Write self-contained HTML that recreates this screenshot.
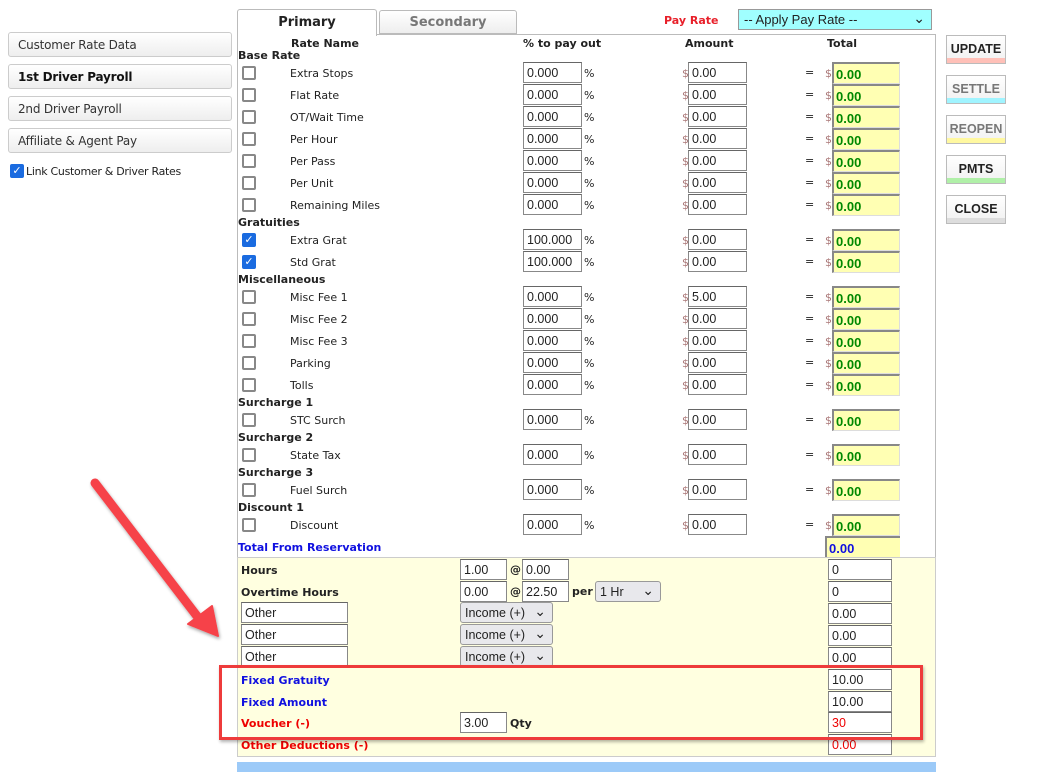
<!DOCTYPE html>
<html><head><meta charset="utf-8"><style>
*{box-sizing:border-box}
body{margin:0;width:1044px;height:772px;background:#fff;font-family:"DejaVu Sans","Liberation Sans",sans-serif;font-size:11px;color:#222;position:relative;overflow:hidden}
.a{position:absolute}
.lb{position:absolute;left:8px;width:224px;height:25px;border:1px solid #ccc;border-radius:3px;background:linear-gradient(#fff,#eee);padding:5px 9px;font-size:12px;color:#333;letter-spacing:-0.2px}
.rb{position:absolute;left:946px;width:60px;height:29px;border:1px solid #bbb;background:linear-gradient(#fff,#f0f0f0);font-weight:bold;font-size:12.5px;text-align:center;padding-top:6px;font-family:"Liberation Sans",sans-serif}
.rb i{position:absolute;left:0;right:0;bottom:0;height:5px}
.r{position:absolute;left:0;width:1044px;height:22px}
.cb{position:absolute;left:242px;top:4px;width:14px;height:14px;border:2px solid #888;border-radius:2px;background:#fff}
.ck{position:absolute;left:242px;top:4px;width:14px;height:14px;border-radius:2px;background:#1a6be0;color:#fff;font-size:11px;line-height:14px;text-align:center;font-weight:bold}
.nm{position:absolute;left:290px;top:5px;font-size:11px}
.in{position:absolute;height:21px;border:1px solid #888;border-top-color:#666;background:#fff;font-size:12.5px;padding:3px 3px 0;font-family:"Liberation Sans",sans-serif;line-height:15px}
.p{left:523px;width:59px;top:0}
.am{left:688px;width:59px;top:0}
.pc{position:absolute;left:584px;top:5px;font-size:11px}
.d{position:absolute;left:682px;top:5px;font-size:11px;color:#a77}
.eq{position:absolute;left:805px;top:4px;font-size:11px}
.d2{position:absolute;left:825px;top:5px;font-size:11px;color:#a77}
.tt{position:absolute;left:832px;top:0;width:68px;height:22px;background:#ffffb3;border-top:2px solid #888;border-left:2px solid #888;border-right:1px solid #ddd;border-bottom:1px solid #ddd;color:#080;font-weight:bold;font-size:13px;padding:3px 2px 0;line-height:15px;font-family:"Liberation Sans",sans-serif}
.h{position:absolute;left:238px;font-weight:bold;font-size:11px}
.bl{position:absolute;left:241px;font-weight:bold;font-size:11px}
.sel{position:absolute;height:21px;border:1px solid #999;border-radius:3px;background:#e8e8ec;font-size:12.5px;padding:3px 4px 0;line-height:15px;font-family:"Liberation Sans",sans-serif}
.sel span{position:absolute;right:6px;top:1px;font-size:14px}
.rc{left:828px;width:64px}
</style></head><body>

<div class="lb" style="top:32px">Customer Rate Data</div>
<div class="lb" style="top:64px;font-weight:bold;color:#111">1st Driver Payroll</div>
<div class="lb" style="top:96px">2nd Driver Payroll</div>
<div class="lb" style="top:128px">Affiliate &amp; Agent Pay</div>
<div class="a" style="left:10px;top:164px;width:14px;height:14px;background:#1a6be0;border-radius:2px;color:#fff;font-size:11px;line-height:14px;text-align:center;font-weight:bold">✓</div>
<div class="a" style="left:26px;top:165px;font-size:11px;letter-spacing:-0.3px">Link Customer &amp; Driver Rates</div>

<div class="a" style="left:237px;top:9px;width:140px;height:27px;border:1px solid #bbb;border-bottom:none;background:#fff;border-radius:3px 3px 0 0;text-align:center;font-weight:bold;font-size:13px;padding-top:5px">Primary</div>
<div class="a" style="left:379px;top:10px;width:138px;height:24px;border:1px solid #bbb;background:linear-gradient(#fff,#eee);border-radius:3px 3px 0 0;text-align:center;font-weight:bold;font-size:13px;padding-top:4px;color:#777">Secondary</div>
<div class="a" style="left:376px;top:34px;width:560px;height:1px;background:#bbb"></div>
<div class="a" style="left:237px;top:35px;width:1px;height:523px;background:#bbb"></div>
<div class="a" style="left:935px;top:34px;width:1px;height:722px;background:#bbb"></div>
<div class="a" style="left:664px;top:14px;color:#e8202a;font-weight:bold;font-size:11px">Pay Rate</div>
<div class="a" style="left:738px;top:9px;width:194px;height:21px;background:#a0ffff;border:1px solid #999;font-size:13px;padding:2px 5px;font-family:'Liberation Sans',sans-serif">-- Apply Pay Rate --<span style="position:absolute;right:6px;top:0px;font-size:14px">&#8964;</span></div>

<div class="a" style="left:291px;top:37px;font-weight:bold">Rate Name</div>
<div class="a" style="left:523px;top:37px;font-weight:bold">% to pay out</div>
<div class="a" style="left:685px;top:37px;font-weight:bold">Amount</div>
<div class="a" style="left:827px;top:37px;font-weight:bold">Total</div>

<div class="rb" style="top:35px">UPDATE<i style="background:#ffc0b8"></i></div>
<div class="rb" style="top:75px;color:#777">SETTLE<i style="background:#a0f4ff"></i></div>
<div class="rb" style="top:115px;color:#777">REOPEN<i style="background:#fff8a0"></i></div>
<div class="rb" style="top:155px">PMTS<i style="background:#b0f0a8"></i></div>
<div class="rb" style="top:195px">CLOSE<i style="background:#ddd"></i></div>

<div class="h" style="top:49px">Base Rate</div>
<div class="r" style="top:62px"><div class="cb"></div><div class="nm">Extra Stops</div><div class="in p">0.000</div><div class="pc">%</div><div class="d">$</div><div class="in am">0.00</div><div class="eq">=</div><div class="d2">$</div><div class="tt">0.00</div></div>
<div class="r" style="top:84px"><div class="cb"></div><div class="nm">Flat Rate</div><div class="in p">0.000</div><div class="pc">%</div><div class="d">$</div><div class="in am">0.00</div><div class="eq">=</div><div class="d2">$</div><div class="tt">0.00</div></div>
<div class="r" style="top:106px"><div class="cb"></div><div class="nm">OT/Wait Time</div><div class="in p">0.000</div><div class="pc">%</div><div class="d">$</div><div class="in am">0.00</div><div class="eq">=</div><div class="d2">$</div><div class="tt">0.00</div></div>
<div class="r" style="top:128px"><div class="cb"></div><div class="nm">Per Hour</div><div class="in p">0.000</div><div class="pc">%</div><div class="d">$</div><div class="in am">0.00</div><div class="eq">=</div><div class="d2">$</div><div class="tt">0.00</div></div>
<div class="r" style="top:150px"><div class="cb"></div><div class="nm">Per Pass</div><div class="in p">0.000</div><div class="pc">%</div><div class="d">$</div><div class="in am">0.00</div><div class="eq">=</div><div class="d2">$</div><div class="tt">0.00</div></div>
<div class="r" style="top:172px"><div class="cb"></div><div class="nm">Per Unit</div><div class="in p">0.000</div><div class="pc">%</div><div class="d">$</div><div class="in am">0.00</div><div class="eq">=</div><div class="d2">$</div><div class="tt">0.00</div></div>
<div class="r" style="top:194px"><div class="cb"></div><div class="nm">Remaining Miles</div><div class="in p">0.000</div><div class="pc">%</div><div class="d">$</div><div class="in am">0.00</div><div class="eq">=</div><div class="d2">$</div><div class="tt">0.00</div></div>

<div class="h" style="top:216px">Gratuities</div>
<div class="r" style="top:229px"><div class="ck">✓</div><div class="nm">Extra Grat</div><div class="in p">100.000</div><div class="pc">%</div><div class="d">$</div><div class="in am">0.00</div><div class="eq">=</div><div class="d2">$</div><div class="tt">0.00</div></div>
<div class="r" style="top:251px"><div class="ck">✓</div><div class="nm">Std Grat</div><div class="in p">100.000</div><div class="pc">%</div><div class="d">$</div><div class="in am">0.00</div><div class="eq">=</div><div class="d2">$</div><div class="tt">0.00</div></div>

<div class="h" style="top:273px">Miscellaneous</div>
<div class="r" style="top:286px"><div class="cb"></div><div class="nm">Misc Fee 1</div><div class="in p">0.000</div><div class="pc">%</div><div class="d">$</div><div class="in am">5.00</div><div class="eq">=</div><div class="d2">$</div><div class="tt">0.00</div></div>
<div class="r" style="top:308px"><div class="cb"></div><div class="nm">Misc Fee 2</div><div class="in p">0.000</div><div class="pc">%</div><div class="d">$</div><div class="in am">0.00</div><div class="eq">=</div><div class="d2">$</div><div class="tt">0.00</div></div>
<div class="r" style="top:330px"><div class="cb"></div><div class="nm">Misc Fee 3</div><div class="in p">0.000</div><div class="pc">%</div><div class="d">$</div><div class="in am">0.00</div><div class="eq">=</div><div class="d2">$</div><div class="tt">0.00</div></div>
<div class="r" style="top:352px"><div class="cb"></div><div class="nm">Parking</div><div class="in p">0.000</div><div class="pc">%</div><div class="d">$</div><div class="in am">0.00</div><div class="eq">=</div><div class="d2">$</div><div class="tt">0.00</div></div>
<div class="r" style="top:374px"><div class="cb"></div><div class="nm">Tolls</div><div class="in p">0.000</div><div class="pc">%</div><div class="d">$</div><div class="in am">0.00</div><div class="eq">=</div><div class="d2">$</div><div class="tt">0.00</div></div>

<div class="h" style="top:396px">Surcharge 1</div>
<div class="r" style="top:409px"><div class="cb"></div><div class="nm">STC Surch</div><div class="in p">0.000</div><div class="pc">%</div><div class="d">$</div><div class="in am">0.00</div><div class="eq">=</div><div class="d2">$</div><div class="tt">0.00</div></div>
<div class="h" style="top:431px">Surcharge 2</div>
<div class="r" style="top:444px"><div class="cb"></div><div class="nm">State Tax</div><div class="in p">0.000</div><div class="pc">%</div><div class="d">$</div><div class="in am">0.00</div><div class="eq">=</div><div class="d2">$</div><div class="tt">0.00</div></div>
<div class="h" style="top:466px">Surcharge 3</div>
<div class="r" style="top:479px"><div class="cb"></div><div class="nm">Fuel Surch</div><div class="in p">0.000</div><div class="pc">%</div><div class="d">$</div><div class="in am">0.00</div><div class="eq">=</div><div class="d2">$</div><div class="tt">0.00</div></div>
<div class="h" style="top:501px">Discount 1</div>
<div class="r" style="top:514px"><div class="cb"></div><div class="nm">Discount</div><div class="in p">0.000</div><div class="pc">%</div><div class="d">$</div><div class="in am">0.00</div><div class="eq">=</div><div class="d2">$</div><div class="tt">0.00</div></div>

<div class="h" style="top:541px;color:#1010e0">Total From Reservation</div>
<div class="a" style="left:825px;top:536px;width:75px;height:22px;background:#ffffb3;border-top:2px solid #888;border-left:2px solid #888;color:#1010e0;font-weight:bold;font-size:13px;padding:3px 2px 0;line-height:15px;font-family:'Liberation Sans',sans-serif">0.00</div>

<div class="a" style="left:237px;top:557px;width:699px;height:200px;background:#ffffe0;border:1px solid #ccc"></div>
<div class="bl" style="top:564px">Hours</div>
<div class="in" style="left:460px;top:559px;width:47px">1.00</div>
<div class="a" style="left:510px;top:563px;font-weight:bold">@</div>
<div class="in" style="left:522px;top:559px;width:47px">0.00</div>
<div class="in rc" style="top:559px">0</div>

<div class="bl" style="top:586px">Overtime Hours</div>
<div class="in" style="left:460px;top:581px;width:47px">0.00</div>
<div class="a" style="left:510px;top:585px;font-weight:bold">@</div>
<div class="in" style="left:522px;top:581px;width:47px">22.50</div>
<div class="a" style="left:572px;top:585px;font-weight:bold">per</div>
<div class="sel" style="left:595px;top:581px;width:66px">1 Hr<span>&#8964;</span></div>
<div class="in rc" style="top:581px">0</div>

<div class="in" style="left:241px;top:602px;width:107px">Other</div>
<div class="sel" style="left:460px;top:602px;width:93px">Income (+)<span>&#8964;</span></div>
<div class="in rc" style="top:603px">0.00</div>
<div class="in" style="left:241px;top:624px;width:107px">Other</div>
<div class="sel" style="left:460px;top:624px;width:93px">Income (+)<span>&#8964;</span></div>
<div class="in rc" style="top:625px">0.00</div>
<div class="in" style="left:241px;top:646px;width:107px">Other</div>
<div class="sel" style="left:460px;top:646px;width:93px">Income (+)<span>&#8964;</span></div>
<div class="in rc" style="top:647px">0.00</div>

<div class="bl" style="top:674px;color:#1010e0">Fixed Gratuity</div>
<div class="in rc" style="top:669px">10.00</div>
<div class="bl" style="top:696px;color:#1010e0">Fixed Amount</div>
<div class="in rc" style="top:691px">10.00</div>
<div class="bl" style="top:717px;color:#e00">Voucher (-)</div>
<div class="in" style="left:460px;top:712px;width:47px">3.00</div>
<div class="a" style="left:510px;top:717px;font-weight:bold">Qty</div>
<div class="in rc" style="top:712px;color:#e00">30</div>
<div class="bl" style="top:739px;color:#e00">Other Deductions (-)</div>
<div class="in rc" style="top:734px;color:#e00">0.00</div>

<div class="a" style="left:237px;top:762px;width:699px;height:10px;background:#9ccaf8"></div>

<div class="a" style="left:219px;top:665px;width:704px;height:75px;border:3px solid #ee3b3b;box-shadow:1px 2px 3px rgba(0,0,0,.3)"></div>

<svg class="a" style="left:80px;top:460px" width="160" height="200">
<defs><filter id="s"><feDropShadow dx="1" dy="2" stdDeviation="1.5" flood-opacity=".35"/></filter></defs>
<g filter="url(#s)" fill="#f6434a" stroke="#f6434a">
<line x1="15" y1="23" x2="120" y2="160" stroke-width="9" stroke-linecap="round"/>
<polygon points="108,164 138,176 132,146" stroke-width="2" stroke-linejoin="round"/>
</g></svg>
</body></html>
